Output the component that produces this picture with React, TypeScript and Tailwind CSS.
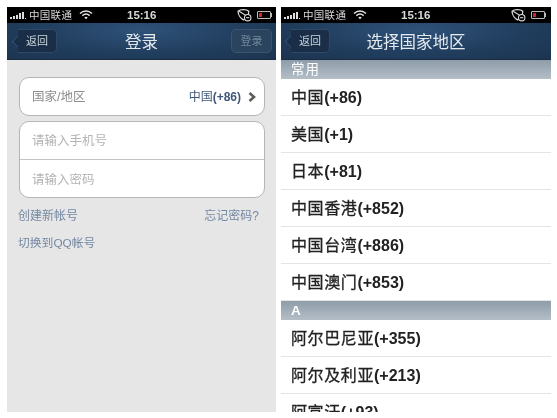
const font = { fontFamily: '"Liberation Sans", "Noto Sans CJK SC", sans-serif' };

function StatusBar() {
  return (
    <div className="h-[16px] bg-black flex items-center text-[#d8d8d8] relative shrink-0">
      {/* signal */}
      <div className="flex items-end gap-[1px] ml-[3px] h-[7px]">
        <div className="w-[2px] h-[2px] bg-[#ddd]" />
        <div className="w-[2px] h-[3px] bg-[#ddd]" />
        <div className="w-[2px] h-[4px] bg-[#ddd]" />
        <div className="w-[2px] h-[6px] bg-[#ddd]" />
        <div className="w-[2px] h-[7px] bg-[#ddd]" />
        <div className="w-[1px] h-[1px] bg-[#ddd]" />
      </div>
      <span className="text-[10.5px] ml-[3px] leading-none tracking-[0.3px]">中国联通</span>
      <svg width="14" height="10" viewBox="0 0 14 10" className="ml-[7px]">
        <path d="M1 3.5 C4.5 .2 9.5 .2 13 3.5" fill="none" stroke="#e6e6e6" strokeWidth="1.5" />
        <path d="M3.4 5.6 C5.5 3.8 8.5 3.8 10.6 5.6" fill="none" stroke="#e6e6e6" strokeWidth="1.5" />
        <path d="M5.3 7.4 L7 9.2 L8.7 7.4 C7.7 6.5 6.3 6.5 5.3 7.4Z" fill="#e6e6e6" />
      </svg>
      <span className="absolute left-[120px] top-[1px] text-[11.5px] leading-[14px] font-bold text-[#d8d8d8]">15:16</span>
      <svg width="15" height="14" viewBox="0 0 14 13" className="absolute left-[230px] top-[1px]">
        <path d="M1 3 C3 1 9 1 11 3 C11 7 8 10 6 11 C4 10 1 7 1 3Z" fill="none" stroke="#ddd" strokeWidth="1.2" />
        <path d="M2 3 L10 8" stroke="#ddd" strokeWidth="1" />
        <circle cx="10" cy="9" r="3" fill="#000" stroke="#ddd" strokeWidth="1" />
        <path d="M8.5 9 H11.5" stroke="#ddd" strokeWidth="1" />
      </svg>
      <div className="absolute left-[250px] top-[4px] w-[14px] h-[8px] border border-[#bbb] rounded-[1px] p-[1px] bg-black">
        <div className="w-[3px] h-full bg-[#e02020]" />
      </div>
      <div className="absolute left-[264px] top-[6px] w-[1px] h-[4px] bg-[#bbb]" />
    </div>
  );
}

function BackButton({ offset }: { offset: string }) {
  return (
    <div className={`relative h-[24px] w-[39px] ${offset}`}>
      <div className="absolute left-[-3px] top-[3.5px] w-[17px] h-[17px] rotate-45 rounded-[2px] bg-[#1a2f47] border-b border-l border-[#3a5573]" />
      <div className="absolute inset-0 rounded-r-[5px] bg-[#1a2f47] border-y border-r border-[#2f4a68] flex items-center justify-center text-[11px] text-[#c9d4de]">
        返回
      </div>
    </div>
  );
}

function NavBar({ title, children }: { title: string; children?: React.ReactNode }) {
  return (
    <div className="h-[37px] shrink-0 relative flex items-center bg-[radial-gradient(ellipse_at_50%_20%,#2f527a_0%,#213e5e_55%,#1c3450_100%)] border-b border-[#1a2c42]">
      {children}
      <span className="absolute inset-x-0 top-[7px] text-center text-[16.5px] text-[#e4e9ee] pointer-events-none">{title}</span>
    </div>
  );
}

function SectionHeader({ label, className }: { label: string; className: string }) {
  return (
    <div className={`flex items-center pl-[10px] text-[13.5px] leading-none font-bold text-white bg-gradient-to-b from-[#8e9da9] to-[#b4bec7] ${className}`}>
      {label}
    </div>
  );
}

const topRows = [
  ['中国', '(+86)'],
  ['美国', '(+1)'],
  ['日本', '(+81)'],
  ['中国香港', '(+852)'],
  ['中国台湾', '(+886)'],
  ['中国澳门', '(+853)'],
];
const aRows = [
  ['阿尔巴尼亚', '(+355)'],
  ['阿尔及利亚', '(+213)'],
  ['阿富汗', '(+93)'],
];

function CountryRow({ name, code }: { name: string; code: string }) {
  return (
    <div className="h-[37px] shrink-0 flex items-center pl-[10px] pt-[1px] border-b border-[#e4e4e4] bg-white text-[#222]">
      <span className="text-[16px] tracking-[0.6px] [-webkit-text-stroke:0.3px_#222]">{name}</span>
      <span className="text-[16px] font-bold">{code}</span>
    </div>
  );
}

export default function App() {
  return (
    <div className="w-[557px] h-[418px] bg-white overflow-hidden flex pl-[7px] pt-[7px] gap-[5px] blur-[0.4px]" style={font}>
      {/* login */}
      <div className="w-[269px] h-[405px] flex flex-col bg-[#e6e6e6]">
        <StatusBar />
        <NavBar title="登录">
          <BackButton offset="ml-[11px]" />
          <div className="ml-auto mr-[4px] w-[41px] h-[24px] rounded-[5px] bg-[#2a435f] border border-[#3a5470] flex items-center justify-center text-[11px] text-[#73879b]">
            登录
          </div>
        </NavBar>
        <div className="pl-[12px] pr-[11px] pt-[17px] flex flex-col">
          <div className="h-[39px] rounded-[10px] bg-white border border-[#b5b5b5] flex items-center pl-[12px] pr-[8px] text-[12.5px]">
            <span className="text-[#8c8c8c] pt-[1px]">国家/地区</span>
            <span className="ml-auto text-[#3f5878] text-[12px]">中国</span>
            <span className="text-[#3f5878] text-[12px] font-bold">(+86)</span>
            <svg width="8" height="10" viewBox="0 0 8 10" className="ml-[7px]">
              <path d="M1.5 1 L6 5 L1.5 9" fill="none" stroke="#5c5c5c" strokeWidth="2.6" />
            </svg>
          </div>
          <div className="mt-[5px] h-[77px] rounded-[10px] bg-white border border-[#b5b5b5] flex flex-col text-[12.5px] text-[#b4b4b4]">
            <div className="h-[38px] flex items-center pl-[12px] pt-[2px] border-b border-[#c4c4c4]">请输入手机号</div>
            <div className="flex-1 flex items-center pl-[12px] pt-[3px]">请输入密码</div>
          </div>
          <div className="mt-[9px] -ml-[1px] flex justify-between items-center text-[12px] text-[#7488a2] pr-[6px]">
            <span>创建新帐号</span>
            <span>忘记密码?</span>
          </div>
          <div className="mt-[10px] -ml-[1px] text-[11.8px] text-[#7488a2]">切换到QQ帐号</div>
        </div>
      </div>
      {/* country list */}
      <div className="w-[270px] h-[405px] flex flex-col bg-white overflow-hidden">
        <StatusBar />
        <NavBar title="选择国家地区">
          <BackButton offset="ml-[10px]" />
        </NavBar>
        <SectionHeader label="常用" className="h-[19px] shrink-0 font-normal tracking-[1px]" />
        {topRows.map(([name, code]) => (
          <CountryRow key={name} name={name} code={code} />
        ))}
        <SectionHeader label="A" className="h-[19px] shrink-0" />
        {aRows.map(([name, code]) => (
          <CountryRow key={name} name={name} code={code} />
        ))}
      </div>
    </div>
  );
}
